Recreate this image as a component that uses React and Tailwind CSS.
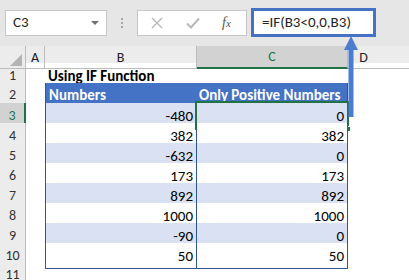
import React from 'react';

const rows = [
    { n: 3, b: '-480', c: '0', band: true },
    { n: 4, b: '382', c: '382', band: false },
    { n: 5, b: '-632', c: '0', band: true },
    { n: 6, b: '173', c: '173', band: false },
    { n: 7, b: '892', c: '892', band: true },
    { n: 8, b: '1000', c: '1000', band: false },
    { n: 9, b: '-90', c: '0', band: true },
    { n: 10, b: '50', c: '50', band: false },
];

const font = { fontFamily: 'Carlito, Lato, "Liberation Sans", sans-serif' };

function RowHead({ n, selected }) {
    return (
        <div
            className={
                'h-full flex items-center justify-center pt-[1px] text-[14px] border-b border-[#d6d6d6] ' +
                (selected
                    ? 'bg-[#d2d2d2] text-[#217346] border-r-2 border-r-[#217346]'
                    : 'bg-[#ececec] text-[#333] border-r border-r-[#bcbcbc]')
            }
        >
            {n}
        </div>
    );
}

export default function App() {
    return (
        <div className="relative w-[409px] h-[280px] overflow-hidden bg-white text-black" style={font}>
            {/* formula bar */}
            <div className="h-[46px] bg-[#e6e6e6] flex items-center pl-[5px]">
                <div className="w-[102px] h-[26px] bg-white border border-[#c6c6c6] flex items-center justify-between pl-[7px] pr-[7px] mt-[-1px]">
                    <span className="text-[15px] text-[#222]">C3</span>
                    <span className="w-0 h-0 border-l-[4px] border-r-[4px] border-t-[4px] border-l-transparent border-r-transparent border-t-[#6f6f6f]"></span>
                </div>
                <div className="w-[30px] flex flex-col items-center gap-[2px]">
                    <span className="w-[2px] h-[2px] bg-[#a8a8a8]"></span>
                    <span className="w-[2px] h-[2px] bg-[#a8a8a8]"></span>
                    <span className="w-[2px] h-[2px] bg-[#a8a8a8]"></span>
                </div>
                <div className="w-[110px] h-[26px] bg-white border border-[#c6c6c6] flex items-center mt-[-1px]">
                    <svg width="12" height="12" viewBox="0 0 12 12" className="ml-[13px]">
                        <path d="M1 1 L11 11 M11 1 L1 11" stroke="#b8b8b8" strokeWidth="1.4" />
                    </svg>
                    <svg width="14" height="12" viewBox="0 0 14 12" className="ml-[23px]">
                        <path d="M1 6.5 L5 10.5 L13 1.5" stroke="#b8b8b8" strokeWidth="2" fill="none" />
                    </svg>
                    <span className="ml-[22px] text-[14px] italic text-[#555]" style={{ fontFamily: '"Liberation Serif", serif' }}>
                        f<span className="text-[11px]">x</span>
                    </span>
                </div>
                <div className="ml-[4px] w-[125px] h-[29px] bg-white border-[3px] border-[#4472c4] flex items-center pl-[8px] mt-[-2px]">
                    <span className="text-[15px] text-[#222]">=IF(B3&lt;0,0,B3)</span>
                </div>
            </div>

            {/* column headers */}
            <div className="grid grid-cols-[26px_19px_152px_151px_1fr] h-[17px] bg-[#ececec] text-[14px] text-[#222]">
                <div className="relative border-r border-[#bcbcbc] border-b border-b-[#bcbcbc]">
                    <svg className="absolute right-[3px] bottom-[2px]" width="12" height="12" viewBox="0 0 12 12">
                        <polygon points="12,0 12,12 0,12" fill="#b4b4b4" />
                    </svg>
                </div>
                <div className="flex items-center justify-center border-r border-[#bcbcbc] border-b border-b-[#bcbcbc]">A</div>
                <div className="flex items-center justify-center border-r border-[#bcbcbc] border-b border-b-[#bcbcbc]">B</div>
                <div className="flex items-center justify-center bg-[#d2d2d2] text-[#217346] border-r border-[#bcbcbc] border-b-2 border-b-[#217346]">C</div>
                <div className="flex items-center justify-center pr-[30px] border-b border-b-[#bcbcbc]">D</div>
            </div>

            {/* row 1 */}
            <div className="grid grid-cols-[26px_19px_152px_151px_1fr] h-[20px]">
                <RowHead n={1} />
                <div></div>
                <div className="col-span-2 flex items-center pt-[2px] pl-[3px] text-[15px] font-bold whitespace-nowrap">Using IF Function</div>
                <div></div>
            </div>

            {/* row 2 header */}
            <div className="grid grid-cols-[26px_19px_152px_151px_1fr] h-[20px]">
                <RowHead n={2} />
                <div></div>
                <div className="bg-[#4472c4] text-white font-bold text-[15px] flex items-center pt-[1px] pl-[3px] border-l border-[#2f5597]">Numbers</div>
                <div className="bg-[#4472c4] text-white font-bold text-[15px] flex items-center pt-[1px] pl-[2px] border-r border-[#2f5597] whitespace-nowrap">Only Positive Numbers</div>
                <div></div>
            </div>

            {/* data rows */}
            {rows.map((r) => (
                <div key={r.n} className="grid grid-cols-[26px_19px_152px_151px_1fr] h-[20px]">
                    <RowHead n={r.n} selected={r.n === 3} />
                    <div></div>
                    <div className={'flex items-center justify-end pt-[2px] pr-[3px] text-[15px] border-l border-r border-b border-[#2f5597] ' + (r.band ? 'bg-[#d9e1f2]' : 'bg-white')}>
                        {r.b}
                    </div>
                    <div className={'relative flex items-center justify-end pt-[2px] pr-[3px] text-[15px] border-r border-b border-[#2f5597] ' + (r.band ? 'bg-[#d9e1f2]' : 'bg-white')}>
                        {r.c}
                        {r.n === 3 && (
                            <>
                                <span className="absolute -left-[2px] -top-[2px] -right-[2px] -bottom-[2px] border-2 border-[#217346]"></span>
                                <span className="absolute -right-[4px] -bottom-[4px] w-[6px] h-[6px] bg-[#217346] border border-white"></span>
                            </>
                        )}
                    </div>
                    <div></div>
                </div>
            ))}

            {/* row 11 */}
            <div className="grid grid-cols-[26px_19px_152px_151px_1fr] h-[20px]">
                <RowHead n={11} />
            </div>

            {/* annotation arrow */}
            <svg className="absolute left-[340px] top-[34px]" width="22" height="86" viewBox="0 0 22 86">
                <path d="M11 2 L18 16 L13.5 16 L13.5 83 L8.5 83 L8.5 16 L4 16 Z" fill="#4a7dd0" />
            </svg>
        </div>
    );
}
